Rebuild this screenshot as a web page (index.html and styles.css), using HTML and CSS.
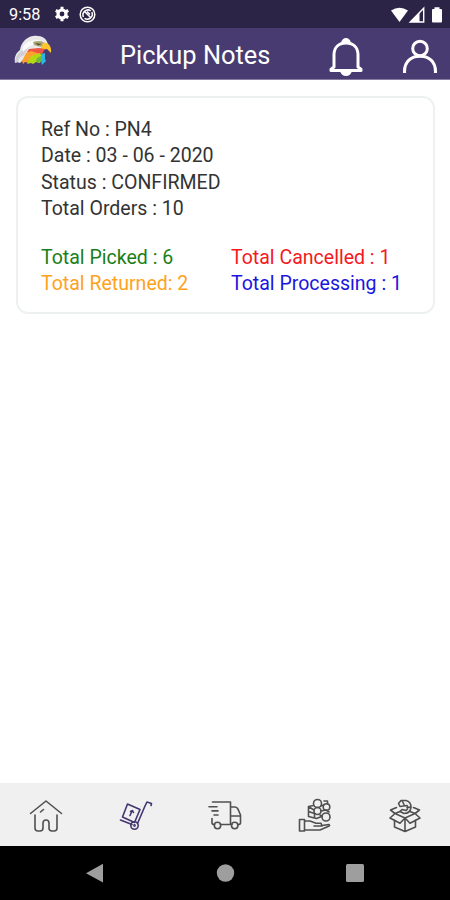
FILE: index.html
```html
<!DOCTYPE html>
<html lang="en">
<head>
  <meta charset="UTF-8" />
  <meta name="viewport" content="width=device-width, initial-scale=1" />
  <title>Pickup Notes</title>
  <link rel="stylesheet" href="styles.css">
</head>
<body>
  <div class="status-bar">
    <span class="time">9:58</span>
    <svg class="status-gear" viewBox="0 0 16 16">
      <circle cx="8" cy="8" r="4" fill="none" stroke="#fff" stroke-width="3.2"/>
      <path d="M8 .8v3M8 12.2v3M1.8 4.4l2.5 1.5M11.7 10.1l2.5 1.5M1.8 11.6l2.5-1.5M11.7 5.9l2.5-1.5" stroke="#fff" stroke-width="3"/>
    </svg>
    <svg class="status-sync" viewBox="0 0 17 17">
      <circle cx="8.5" cy="8.5" r="7.3" fill="none" stroke="#fff" stroke-width="1.5"/>
      <path d="M4.4 11a5 5 0 0 1 7.3-6.2M12.8 6a5 5 0 0 1-7.3 6.3M5.3 5.3l6.8 6.7M8 5.5l3 3" fill="none" stroke="#fff" stroke-width="1.5"/>
    </svg>
    <svg class="status-signal" viewBox="0 0 54 18">
      <path d="M1 4.500Q9.500-1 18 4.500L9.500 16z" fill="#fff"/>
      <path d="M20.300 16L33.700 2.200V16z" fill="none" stroke="#fff" stroke-width="1.4"/>
      <path d="M20 16L29.500 6.200V16z" fill="#fff"/>
      <path d="M42 4q0-1 1-1h1.500V1.200h5V3H51q1 0 1 1v11.500q0 1-1 1h-8q-1 0-1-1z" fill="#fff"/>
    </svg>
  </div>

  <div class="header">
    <svg class="logo" viewBox="0 0 38 31">
      <path d="M1 28C0 22 2 18 6 15 7 8 12 2 19 1c8-1 14 2 15 9l-8 4-11 3-4 6-5 5-3-1z" fill="#e9e9ea"/>
      <path d="M1 28c0-5 2-9 6-12l7-3-4 7-5 3-1 4z" fill="#cfcfd5"/>
      <path d="M9 12c4-6 9-7 17-7l-5 4-7 3-5 5z" fill="#fafafa"/>
      <path d="M19 7c5-2 10-1 13 2l-5 3-7-2z" fill="#aaa976"/>
      <path d="M21 8l7 1-4 1.500z" fill="#55543c"/>
      <path d="M29 8c5-1 9 3 8 10l-4-4-7 1z" fill="#ffc52b"/>
      <path d="M15 14l10-1 6 1-3 5-12 1-3-3z" fill="#ee5542"/>
      <path d="M12 18l5-2 9 3-7 4-4 5-4-1-2 2-1-3z" fill="#ff9f2d"/>
      <path d="M17 21l9-3 2 4-2 6-4-1-3 2-2-1-4 1z" fill="#b5d814"/>
      <path d="M23 23l4-2v5l-3 2-2-2z" fill="#70b83b"/>
      <path d="M27 19l4-1v6l1 2-4 4-1-4z" fill="#29b9df"/>
    </svg>
    <h1>Pickup Notes</h1>
    <svg class="bell" viewBox="0 0 34 40">
      <path d="M5 30V18C5 10 10 6 17 6s12 4 12 12v12l3 2.200v1.300H2v-1.300z" fill="none" stroke="#fff" stroke-width="3" stroke-linejoin="round"/>
      <path d="M12 5.500C13 2.500 14.500 1 17 1s4 1.500 5 4.500zM11 34h12c-1 3.500-3 5-6 5s-5-1.500-6-5z" fill="#fff"/>
    </svg>
    <svg class="user" viewBox="0 0 36 35">
      <circle cx="18" cy="9.500" r="7.300" fill="none" stroke="#fff" stroke-width="3"/>
      <path d="M2.500 34v-1.500C2.500 22.500 9 17.200 18 17.200s15.500 5.300 15.500 15.300V34" fill="none" stroke="#fff" stroke-width="3.100"/>
    </svg>
  </div>

  <div class="content">
    <div class="note-card">
      <p>Ref No : PN4</p>
      <p>Date : 03 - 06 - 2020</p>
      <p>Status : CONFIRMED</p>
      <p>Total Orders : 10</p>
      <div class="totals">
        <span class="picked">Total Picked : 6</span>
        <span class="cancelled">Total Cancelled : 1</span>
        <span class="returned">Total Returned: 2</span>
        <span class="processing">Total Processing : 1</span>
      </div>
    </div>
  </div>

  <div class="tab-bar">
    <div class="tab">
      <svg viewBox="0 0 36 36">
        <path d="M2.500 15.500L18 3l15.500 12.500M7 17V30q0 3 3 3h2q3 0 3-3v-5q0-3 3-3t3 3v5q0 3 3 3h2q3 0 3-3V17M12.500 14l3-2.500"/>
      </svg>
    </div>
    <div class="tab active">
      <svg viewBox="0 0 36 36">
        <path d="M9.500 6l12.500 5.500-5.500 13L4.500 19zM12 17.500l2-4.500M12.500 13.500l2-1 1 2M2.500 22l11.500 4.500M19.500 25.500l7.500-17.500 2-4 4.500 1.500-.5 2"/>
        <circle cx="16.500" cy="27.500" r="3.700"/>
        <circle cx="16.500" cy="27.500" r=".6"/>
      </svg>
    </div>
    <div class="tab">
      <svg viewBox="0 0 36 36">
        <path d="M5.500 4H23.500v22.500H13.500M23.500 9h4.500q2 0 3 2.200l2.500 5.800V25q0 1.500-2.500 1.500M23.500 18H33M21 26.500h4M5 20.500v4.500q0 1.500 2.500 1.500M2 8.800h8M5 12.900h6M7 17h4"/>
        <circle cx="10.500" cy="27.500" r="3.200"/>
        <circle cx="27.700" cy="27.500" r="3.200"/>
      </svg>
    </div>
    <div class="tab">
      <svg viewBox="0 0 36 36">
        <path d="M2.500 21.500h5v11.500h-5zM7.500 23H13l6 2.200h5l1 2.800H17M25 27.500l7-1q1.500 1.500-1 2l-8 3.500H7.500M11.500 8.500l5-1M11.500 8.500v10l8 2 5-2M11.500 13.500l6 2v4.500M12 9l5 3"/>
        <circle cx="20.500" cy="5.500" r="4"/>
        <circle cx="20.500" cy="13" r="3.500"/>
        <circle cx="29.500" cy="9" r="3.300"/>
        <circle cx="29" cy="19" r="4"/>
        <path d="M27 3h3.500v3M24 8l2.500-1M24 13l5-1 3 2M23 17l2 1"/>
      </svg>
    </div>
    <div class="tab">
      <svg viewBox="0 0 36 36">
        <path d="M7.500 22v7L18 33.500 28.500 29v-7M18 20v13M3 20l5-4.500L18 20l-5 5.200zM33 20l-5-4.500L18 20l5 5.200zM8 15.500L3.500 12l6-2.500M28 15.500l4.500-3.500-6-2.500M8 15.500l5-2M28 15.500l-5-2"/>
        <path d="M11.500 5.500L14 2.500h5q5 1 5 7-1 6-7 6l-4-2 2-2 4 1q3-2 1-5l-7 1zM15 2.500l2 4M20 9.500l3.500-.5"/>
      </svg>
    </div>
  </div>

  <div class="system-nav">
    <svg viewBox="0 0 20 20"><path d="M1 10.200L18 .8v18.700z"/></svg>
    <svg viewBox="0 0 20 20"><circle cx="10.500" cy="10" r="8.700"/></svg>
    <svg viewBox="0 0 20 20"><rect x="1" y="1" width="18" height="18" rx="1.500"/></svg>
  </div>
</body>
</html>
```
FILE: styles.css
```css
* {
  box-sizing: border-box;
  margin: 0;
  padding: 0;
}
body {
  font-family: Roboto, sans-serif;
  background-color: #fff;
  color: #333;
  height: 100vh;
  display: flex;
  flex-direction: column;
  overflow: hidden;
}
svg {
  display: block;
  flex-shrink: 0;
}
.status-bar {
  height: 28px;
  flex-shrink: 0;
  display: flex;
  align-items: center;
  padding: 0 6px 0 9px;
  background: #2c2447;
  color: #fff;
}
.time {
  width: 45px;
  font-size: 16.3px;
  line-height: 20px;
  padding-top: 2px;
}
.status-gear {
  width: 16px;
  height: 16px;
}
.status-sync {
  width: 17px;
  height: 17px;
  margin-left: 9px;
}
.status-signal {
  width: 54px;
  height: 18px;
  margin-left: auto;
  margin-top: 2px;
}
.header {
  height: 52px;
  flex-shrink: 0;
  display: flex;
  align-items: center;
  padding: 0 12px 0 14px;
  background: #483b72;
  border-bottom: 1px solid #857ca0;
}
.logo {
  width: 38px;
  height: 31px;
  margin-bottom: 7px;
}
.header h1 {
  width: 152px;
  margin-left: 68px;
  padding-top: 2px;
  font-size: 25.4px;
  font-weight: 400;
  line-height: 32px;
  color: #fff;
  white-space: nowrap;
}
.bell {
  width: 34px;
  height: 40px;
  margin-left: 57px;
  margin-top: 6px;
}
.user {
  width: 36px;
  height: 35px;
  margin-left: auto;
  margin-top: 5px;
}
.content {
  flex: 1;
  padding: 16px 15px 0 16px;
}
.note-card {
  height: 218px;
  padding: 19px 23px;
  border: 2px solid #eef1f1;
  border-radius: 12px;
  font-size: 19.55px;
  line-height: 26.4px;
}
.totals {
  display: grid;
  grid-template-columns: 190px 1fr;
  margin-top: 22px;
  white-space: nowrap;
}
.picked { color: #198019; }
.cancelled { color: #f5191c; }
.returned { color: #ffa21c; }
.processing { color: #1a16e0; }
.tab-bar {
  height: 63px;
  flex-shrink: 0;
  display: flex;
  padding: 2px 0 0 1px;
  background: #f0f0f0;
}
.tab {
  flex: 1;
  display: flex;
  align-items: center;
  justify-content: center;
}
.tab svg {
  width: 36px;
  height: 36px;
  fill: none;
  stroke: #505050;
  stroke-width: 1.6;
  stroke-linecap: round;
  stroke-linejoin: round;
}
.tab.active svg {
  stroke: #43366f;
}
.system-nav {
  height: 54px;
  flex-shrink: 0;
  display: flex;
  align-items: center;
  justify-content: space-between;
  padding: 0 85px;
  background: #000;
}
.system-nav svg {
  width: 20px;
  height: 20px;
  fill: #9e9e9e;
}
```
